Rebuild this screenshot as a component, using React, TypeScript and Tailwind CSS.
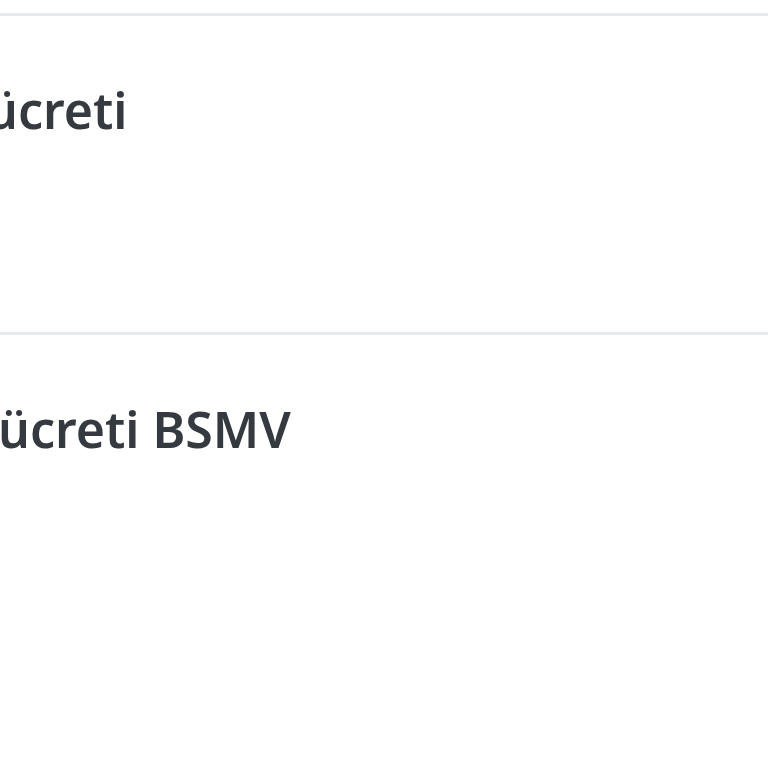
export default function App() {
  return (
    <div
      className="w-[768px] h-[768px] overflow-hidden bg-white text-[#343a40]"
      style={{ fontFamily: '"Noto Sans", "Open Sans", sans-serif' }}
    >
      <div className="h-[13px]" />
      <div className="border-t-[3px] border-[#e6e9ed] h-[319px] pt-[64px]">
        <div className="text-[50px] leading-[1.2] font-semibold whitespace-nowrap ml-[-14px]">ücreti</div>
      </div>
      <div className="border-t-[3px] border-[#e6e9ed] h-[436px] pt-[64px]">
        <div className="text-[50px] leading-[1.2] font-semibold whitespace-nowrap ml-[-2px]">ücreti BSMV</div>
      </div>
    </div>
  )
}
